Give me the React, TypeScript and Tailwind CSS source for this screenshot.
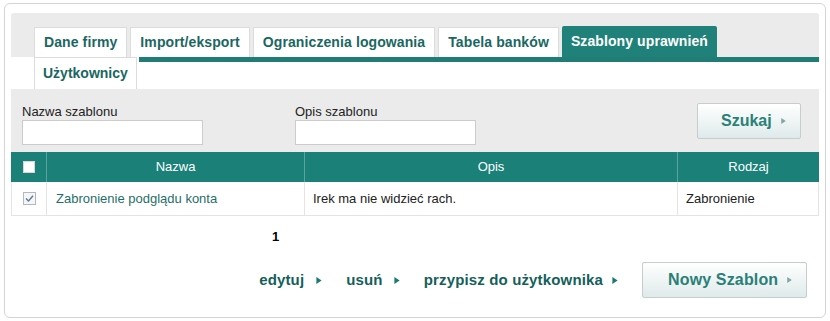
const font = { fontFamily: '"Liberation Sans", Arial, sans-serif' };

const tabs = ["Dane firmy", "Import/eksport", "Ograniczenia logowania", "Tabela banków"];

function Arrow({ className = "" }: { className?: string }) {
  return (
    <svg viewBox="0 0 6 8" className={className} aria-hidden="true">
      <path d="M0 0 L6 4 L0 8 Z" fill="currentColor" />
    </svg>
  );
}

function Tick() {
  return (
    <svg viewBox="0 0 13 13" className="h-[13px] w-[13px]" aria-hidden="true">
      <rect x="0.5" y="0.5" width="12" height="12" fill="#f4f6f8" stroke="#b4b8bc" />
      <path d="M3 6.5 L5.5 9 L10 3.8" fill="none" stroke="#5d7a93" strokeWidth="1.4" />
    </svg>
  );
}

function GhostButton({ label, className = "" }: { label: string; className?: string }) {
  return (
    <button
      className={`flex h-[36px] items-center rounded-[2px] border border-[#c6cdcd] bg-gradient-to-b from-white to-[#dfeaea] text-[16px] font-bold text-[#2a8078] ${className}`}
    >
      <span>{label}</span>
      <Arrow className="ml-[9px] h-[6px] w-[5px] text-[#7fa6a2]" />
    </button>
  );
}

export default function App() {
  return (
    <div className="h-[321px] w-[830px] bg-white pl-[4px] pt-[3px]" style={font}>
      <div className="h-[315px] w-[822px] rounded-[6px] border border-[#d4d4d4] px-[6px] pt-[9px]">
        {/* tab row 1 */}
        <div className="flex h-[44px] items-end gap-[3px] rounded-t-[3px] bg-[#ebebeb] pl-[23px]">
          {tabs.map((t) => (
            <div
              key={t}
              className="flex h-[30px] items-center border border-b-0 border-[#dcdcdc] bg-white px-[9px] text-[14px] font-bold tracking-[0.1px] text-[#1a6762]"
            >
              {t}
            </div>
          ))}
          <div className="flex h-[31px] items-center rounded-t-[2px] bg-[#1f8179] px-[9px] text-[14px] font-bold tracking-[0.1px] text-white">
            Szablony uprawnień
          </div>
        </div>

        {/* tab row 2 */}
        <div className="flex h-[32px] items-start">
          <div className="w-[23px]" />
          <div className="flex h-[32px] items-center border border-b-0 border-[#dcdcdc] bg-white px-[8px] text-[14px] font-bold text-[#1a6762]">
            Użytkownicy
          </div>
          <div className="ml-[2px] h-[5px] flex-1 bg-[#1f7d76]" />
        </div>

        {/* search */}
        <div className="flex h-[63px] bg-[#ebebeb]">
          <div className="w-[284px] pl-[11px] pt-[15px]">
            <div className="text-[13px] leading-[16px] text-[#222]">Nazwa szablonu</div>
            <div className="h-[25px] w-[181px] border border-[#cccccc] bg-white" />
          </div>
          <div className="w-[181px] pt-[15px]">
            <div className="text-[13px] leading-[16px] text-[#222]">Opis szablonu</div>
            <div className="h-[25px] w-[181px] border border-[#cccccc] bg-white" />
          </div>
          <GhostButton label="Szukaj" className="ml-auto mr-[18px] w-[104px] self-center pl-[23px]" />
        </div>

        {/* table */}
        <div className="flex h-[30px] bg-[#1a8078] text-[13px] text-white">
          <div className="flex w-[36px] items-center justify-center border-r border-[#5aa39d]">
            <div className="h-[12px] w-[12px] border border-[#d8d8d8] bg-white" />
          </div>
          <div className="flex w-[258px] items-center justify-center border-r border-[#5aa39d]">Nazwa</div>
          <div className="flex w-[373px] items-center justify-center border-r border-[#5aa39d]">Opis</div>
          <div className="flex flex-1 items-center justify-center">Rodzaj</div>
        </div>
        <div className="flex h-[34px] border-x border-b border-[#e4e4e4] text-[13px] text-[#222]">
          <div className="flex w-[35px] items-center justify-center border-r border-[#e4e4e4]">
            <Tick />
          </div>
          <div className="flex w-[258px] items-center border-r border-[#e4e4e4] pl-[9px] text-[#1f6f69]">
            Zabronienie podglądu konta
          </div>
          <div className="flex w-[373px] items-center border-r border-[#e4e4e4] pl-[8px]">
            Irek ma nie widzieć rach.
          </div>
          <div className="flex flex-1 items-center pl-[8px]">Zabronienie</div>
        </div>

        {/* pagination */}
        <div className="pl-[261px] pt-[13px] text-[13px] font-bold leading-[16px] text-black">1</div>

        {/* actions */}
        <div className="mt-[17px] flex items-center justify-end pr-[12px] text-[15px] font-bold tracking-[0.15px] text-[#145f5a]">
          <span>edytuj</span>
          <Arrow className="ml-[12px] h-[7px] w-[6px] text-[#1b7a72]" />
          <span className="ml-[24px]">usuń</span>
          <Arrow className="ml-[11px] h-[7px] w-[6px] text-[#1b7a72]" />
          <span className="ml-[24px]">przypisz do użytkownika</span>
          <Arrow className="ml-[9px] h-[7px] w-[6px] text-[#1b7a72]" />
          <GhostButton label="Nowy Szablon" className="ml-[24px] w-[165px] pl-[25px]" />
        </div>
      </div>
    </div>
  );
}
